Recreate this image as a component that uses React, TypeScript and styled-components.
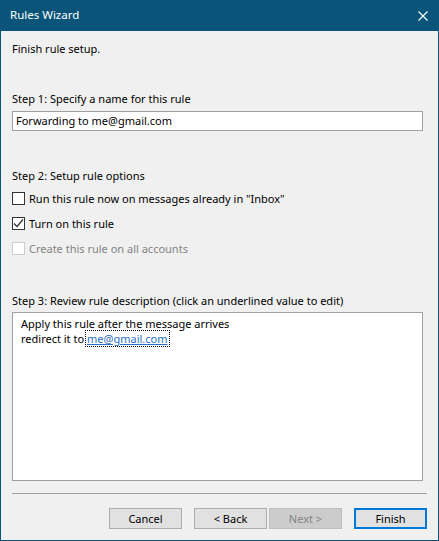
import React from "react";
import styled, { createGlobalStyle } from "styled-components";

const FONT = `"Noto Sans", "Liberation Sans", sans-serif`;

const Global = createGlobalStyle`
  html, body { margin: 0; padding: 0; background: #f0f0f0; }
  body { font-family: ${FONT}; font-size: 11px; color: #000; }
  * { box-sizing: border-box; }
`;

const Window = styled.div`
  width: 439px;
  height: 541px;
  display: flex;
  flex-direction: column;
  background: #f0f0f0;
  border: 1px solid #0a5479;
  border-top: none;
  font-family: ${FONT};
  font-size: 11px;
`;

const TitleBar = styled.div`
  height: 31px;
  margin: 0 -1px;
  background: #0a5479;
  color: #fff;
  display: flex;
  align-items: center;
  justify-content: space-between;
  padding: 0 11px 0 10px;
  line-height: 16px;
  flex-shrink: 0;
`;

const Title = styled.span`
  font-size: 11.5px;
  padding-bottom: 1px;
`;

const CloseButton = styled.div`
  width: 10px;
  height: 10px;
  display: flex;
`;

const Body = styled.div`
  flex: 1;
  display: flex;
  flex-direction: column;
  padding: 10px 11px 11px 11px;
`;

const Label = styled.div<{ $top: number }>`
  line-height: 16px;
  height: 16px;
  margin-top: ${(p) => p.$top}px;
  white-space: nowrap;
`;

const TextInput = styled.div`
  margin-top: 4px;
  width: 411px;
  height: 20px;
  border: 1px solid #a0a0a0;
  background: #fff;
  padding: 0 3px;
  line-height: 18px;
  white-space: nowrap;
`;

const Options = styled.div`
  margin-top: 6px;
  display: flex;
  flex-direction: column;
  gap: 9px;
`;

const CheckRow = styled.div<{ $disabled?: boolean }>`
  display: flex;
  align-items: center;
  height: 16px;
  gap: 4px;
  color: ${(p) => (p.$disabled ? "#838383" : "#000")};
  white-space: nowrap;
`;

const Box = styled.span<{ $disabled?: boolean }>`
  width: 13px;
  height: 13px;
  flex-shrink: 0;
  margin-top: 1px;
  border: 1px solid ${(p) => (p.$disabled ? "#cccccc" : "#333333")};
  background: #fff;
  display: flex;
  align-items: center;
  justify-content: center;
`;

const Description = styled.div`
  margin-top: 3px;
  width: 411px;
  height: 169px;
  border: 1px solid #a0a0a0;
  background: #fff;
  padding: 3px 8px;
  line-height: 15px;
`;

const DescLine = styled.div`
  white-space: nowrap;
  height: 15px;
`;

const Link = styled.span`
  color: #2a6fbf;
  text-decoration: underline;
  outline: 1px dotted #000;
  padding: 0 1px;
  margin-left: 2px;
`;

const Separator = styled.div`
  margin-top: 12px;
  height: 1px;
  background: #a0a0a0;
`;

const ButtonRow = styled.div`
  margin-top: 14px;
  display: flex;
  justify-content: flex-end;
`;

const Button = styled.div<{ $disabled?: boolean; $primary?: boolean; $gap?: number }>`
  width: 73px;
  height: 21px;
  margin-left: ${(p) => p.$gap ?? 0}px;
  display: flex;
  align-items: center;
  justify-content: center;
  background: ${(p) => (p.$disabled ? "#cccccc" : "#e1e1e1")};
  color: ${(p) => (p.$disabled ? "#838383" : "#000")};
  border: ${(p) =>
    p.$primary ? "2px solid #0078d7" : p.$disabled ? "1px solid #bfbfbf" : "1px solid #adadad"};
  line-height: 16px;
`;

function Check({ checked, disabled }: { checked?: boolean; disabled?: boolean }) {
  return (
    <Box $disabled={disabled}>
      {checked && (
        <svg width="11" height="11" viewBox="0 0 11 11">
          <path d="M1 5.5 L4 8.5 L10 1.5" fill="none" stroke="#333" strokeWidth="1.3" />
        </svg>
      )}
    </Box>
  );
}

export default function App() {
  return (
    <>
      <Global />
      <Window>
        <TitleBar>
          <Title>Rules Wizard</Title>
          <CloseButton>
            <svg width="10" height="10" viewBox="0 0 10 10">
              <path d="M0.5 0.5 L9.5 9.5 M9.5 0.5 L0.5 9.5" stroke="#fff" strokeWidth="1.1" fill="none" />
            </svg>
          </CloseButton>
        </TitleBar>
        <Body>
          <Label $top={0}>Finish rule setup.</Label>
          <Label $top={34}>Step 1: Specify a name for this rule</Label>
          <TextInput>Forwarding to me@gmail.com</TextInput>
          <Label $top={37}>Step 2: Setup rule options</Label>
          <Options>
            <CheckRow>
              <Check />
              Run this rule now on messages already in "Inbox"
            </CheckRow>
            <CheckRow>
              <Check checked />
              Turn on this rule
            </CheckRow>
            <CheckRow $disabled>
              <Check disabled />
              Create this rule on all accounts
            </CheckRow>
          </Options>
          <Label $top={37}>Step 3: Review rule description (click an underlined value to edit)</Label>
          <Description>
            <DescLine>Apply this rule after the message arrives</DescLine>
            <DescLine>
              redirect it to<Link>me@gmail.com</Link>
            </DescLine>
          </Description>
          <Separator />
          <ButtonRow>
            <Button>Cancel</Button>
            <Button $gap={12}>&lt; Back</Button>
            <Button $gap={2} $disabled>
              Next &gt;
            </Button>
            <Button $gap={12} $primary>
              Finish
            </Button>
          </ButtonRow>
        </Body>
      </Window>
    </>
  );
}
